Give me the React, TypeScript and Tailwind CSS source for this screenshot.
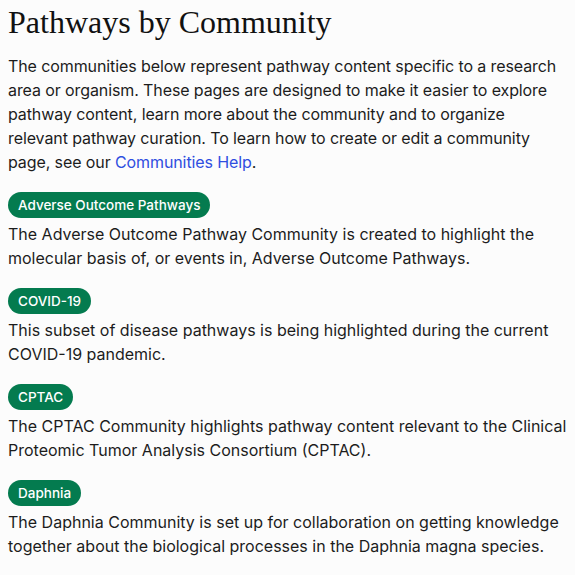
const communities = [
  {
    name: 'Adverse Outcome Pathways',
    text: 'The Adverse Outcome Pathway Community is created to highlight the molecular basis of, or events in, Adverse Outcome Pathways.',
  },
  {
    name: 'COVID-19',
    text: 'This subset of disease pathways is being highlighted during the current COVID-19 pandemic.',
  },
  {
    name: 'CPTAC',
    text: 'The CPTAC Community highlights pathway content relevant to the Clinical Proteomic Tumor Analysis Consortium (CPTAC).',
  },
  {
    name: 'Daphnia',
    text: 'The Daphnia Community is set up for collaboration on getting knowledge together about the biological processes in the Daphnia magna species.',
  },
  {
    name: 'Diseases',
    text: 'The Diseases Community highlights pathways relevant to human disease.',
  },
];

export default function App() {
  return (
    <div className="min-h-screen bg-[#fcfcfc] px-2 text-[16px] leading-6 text-[#1c1c1c] font-['Inter',sans-serif]">
      <h1 className="pt-[2px] text-[32px] leading-[40px] text-[#111] font-['Liberation_Serif',serif]">
        Pathways by Community
      </h1>
      <p className="mt-3 tracking-[-0.1px]">
        The communities below represent pathway content specific to a research area or organism. These pages are
        designed to make it easier to explore pathway content, learn more about the community and to organize relevant
        pathway curation. To learn how to create or edit a community page, see our{' '}
        <a href="#" className="text-[#2f4ee0]">
          Communities Help
        </a>
        .
      </p>
      <div className="mt-[18px] flex flex-col gap-[18px]">
        {communities.map((c) => (
          <div key={c.name}>
            <span className="inline-block rounded-full bg-[#047b4f] px-[10px] text-[13.5px] font-medium leading-[26px] text-white">
              {c.name}
            </span>
            <p className="mt-1">{c.text}</p>
          </div>
        ))}
      </div>
    </div>
  );
}
